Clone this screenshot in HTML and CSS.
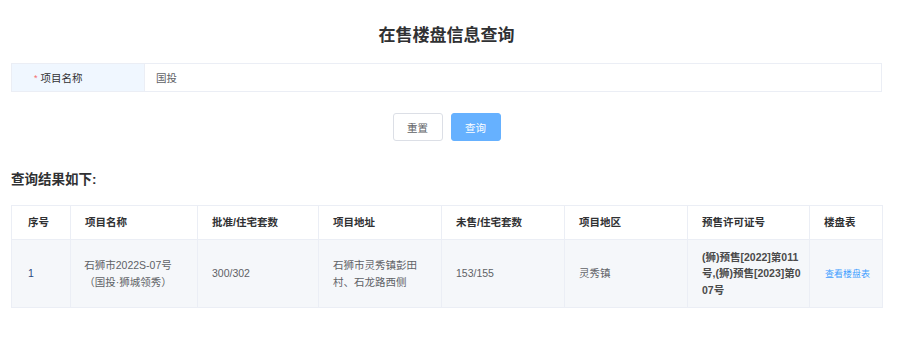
FILE: index.html
```html
<!DOCTYPE html>
<html lang="zh-CN">
<head>
    <meta charset="UTF-8">
    <meta name="viewport" content="width=device-width, initial-scale=1.0">
    <title>在售楼盘信息查询</title>
    <link rel="stylesheet" href="styles.css">
</head>
<body>
    <div class="page">
        <h1 class="page-title">在售楼盘信息查询</h1>
        <form class="search-form" id="searchForm">
            <div class="form-row">
                <label class="form-label" for="projectName"><span class="required">*</span>项目名称</label>
                <input class="form-input" type="text" id="projectName" value="国投">
            </div>
            <div class="form-actions">
                <button type="reset" class="btn">重置</button>
                <button type="submit" class="btn btn-primary">查询</button>
            </div>
        </form>
        <h2 class="result-title">查询结果如下:</h2>
        <table class="result-table">
            <colgroup>
                <col style="width: 59px">
                <col style="width: 127px">
                <col style="width: 121px">
                <col style="width: 123px">
                <col style="width: 123px">
                <col style="width: 123px">
                <col style="width: 122px">
                <col style="width: 73px">
            </colgroup>
            <thead>
                <tr>
                    <th class="col-index">序号</th>
                    <th>项目名称</th>
                    <th>批准/住宅套数</th>
                    <th>项目地址</th>
                    <th>未售/住宅套数</th>
                    <th>项目地区</th>
                    <th>预售许可证号</th>
                    <th>楼盘表</th>
                </tr>
            </thead>
            <tbody>
                <tr>
                    <td class="col-index index-num">1</td>
                    <td class="center">石狮市2022S-07号（国投·狮城领秀）</td>
                    <td>300/302</td>
                    <td>石狮市灵秀镇彭田村、石龙路西侧</td>
                    <td>153/155</td>
                    <td>灵秀镇</td>
                    <td class="permit">(狮)预售[2022]第011号,(狮)预售[2023]第007号</td>
                    <td class="col-link"><a href="#" class="view-link">查看楼盘表</a></td>
                </tr>
            </tbody>
        </table>
    </div>
</body>
</html>
```

FILE: styles.css
```css
body {
    margin: 0;
    font-family: "Liberation Sans", "Noto Sans CJK SC", sans-serif;
    color: #606266;
    background-color: #fff;
}
.page {
    padding: 0 18px 0 11px;
}
.page-title {
    margin: 0;
    padding-top: 24px;
    line-height: 24px;
    font-size: 17px;
    font-weight: bold;
    color: #303133;
    text-align: center;
}
.search-form {
    margin-top: 15px;
}
.form-row {
    display: flex;
    height: 29px;
    border: 1px solid #ebeef5;
    box-sizing: border-box;
}
.form-label {
    width: 133px;
    flex-shrink: 0;
    display: flex;
    align-items: center;
    padding-left: 22px;
    box-sizing: border-box;
    background-color: #f0f7ff;
    border-right: 1px solid #ebeef5;
    font-size: 10.5px;
    color: #303133;
}
.required {
    color: #f56c6c;
    margin-right: 3px;
    font-size: 9px;
}
.form-input {
    flex: 1;
    border: none;
    outline: none;
    padding: 0 11px;
    font-family: inherit;
    font-size: 10.5px;
    color: #606266;
}
.form-actions {
    display: flex;
    justify-content: center;
    gap: 8px;
    margin-top: 21px;
}
.btn {
    width: 50px;
    height: 28px;
    border: 1px solid #dcdfe6;
    border-radius: 3px;
    background-color: #fff;
    color: #606266;
    font-family: inherit;
    font-size: 10.5px;
    cursor: pointer;
    padding: 0;
}
.btn-primary {
    background-color: #66b1ff;
    border-color: #66b1ff;
    color: #fff;
}
.result-title {
    margin: 29px 0 0;
    line-height: 20px;
    font-size: 13.5px;
    font-weight: bold;
    color: #303133;
}
.result-table {
    margin-top: 15px;
    width: 871px;
    border-collapse: collapse;
    table-layout: fixed;
    font-size: 10.5px;
}
.result-table th,
.result-table td {
    border: 1px solid #ebeef5;
    padding: 0 14px;
    text-align: left;
    line-height: 16.5px;
}
.result-table th {
    height: 33px;
    font-weight: bold;
    color: #303133;
    background-color: #fff;
}
.result-table td {
    height: 67px;
    background-color: #f5f7fa;
}
.result-table .col-index {
    padding-left: 16px;
}
.result-table .center {
    text-align: center;
    padding: 0 24px 0 12px;
}
.result-table .permit {
    padding: 0 8px 0 14px;
    font-weight: bold;
    color: #4a4a4a;
    word-break: break-all;
}
.result-table .col-link {
    padding: 0 0 0 15px;
    white-space: nowrap;
}
.index-num {
    color: #2b4a7e;
}
.view-link {
    color: #409eff;
    text-decoration: none;
    font-size: 9px;
}
```
